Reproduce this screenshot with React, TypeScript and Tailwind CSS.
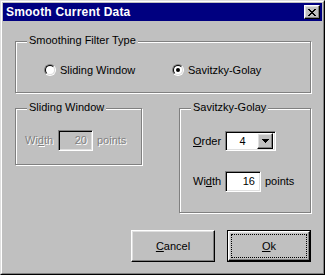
import React from "react";

const sunken =
  "border border-t-[#808080] border-l-[#808080] border-b-white border-r-white shadow-[inset_1px_1px_0_#000,inset_-1px_-1px_0_#dfdfdf]";
const raised =
  "border border-t-white border-l-white border-b-black border-r-black shadow-[inset_-1px_-1px_0_#808080,inset_1px_1px_0_#dfdfdf]";
const disabledText = "text-[#808080] [text-shadow:1px_1px_0_#fff]";

function Radio({ checked }: { checked?: boolean }) {
  return (
    <span className="flex w-[12px] h-[12px] rounded-full border border-t-[#808080] border-l-[#808080] border-b-white border-r-white">
      <span className="flex flex-1 items-center justify-center rounded-full border border-t-black border-l-black border-b-[#dfdfdf] border-r-[#dfdfdf] bg-white">
        {checked && <span className="w-[4px] h-[4px] rounded-full bg-black" />}
      </span>
    </span>
  );
}

function Group({ label, className, children }: { label: string; className: string; children?: React.ReactNode }) {
  return (
    <div className={"relative border border-[#808080] shadow-[1px_1px_0_#fff,inset_1px_1px_0_#fff] " + className}>
      <span className="absolute -top-[8px] left-[11px] px-[2px] bg-[#c0c0c0] leading-[13px]">{label}</span>
      {children}
    </div>
  );
}

export default function App() {
  return (
    <div
      className="w-[325px] h-[275px] bg-[#c0c0c0] border border-t-[#dfdfdf] border-l-[#dfdfdf] border-b-black border-r-black text-[11px] text-black"
      style={{ fontFamily: '"Liberation Sans", Arial, sans-serif' }}
    >
      <div className="h-full flex flex-col p-[1px] border border-t-white border-l-white border-b-[#808080] border-r-[#808080]">
        {/* title bar */}
        <div className="h-[18px] bg-[#000080] flex items-center justify-between pl-[3px] pr-[2px]">
          <span className="text-white font-bold text-[12px] leading-[14px] tracking-[0.2px]">Smooth Current Data</span>
          <button className={"w-[16px] h-[14px] bg-[#c0c0c0] flex items-center justify-center " + raised}>
            <svg width="8" height="7" viewBox="0 0 8 7" shapeRendering="crispEdges">
              <path d="M0 0h2v1h-2zM6 0h2v1h-2zM1 1h2v1h-2zM5 1h2v1h-2zM2 2h4v1h-4zM3 3h2v1h-2zM2 4h4v1h-4zM1 5h2v1h-2zM5 5h2v1h-2zM0 6h2v1h-2zM6 6h2v1h-2z" fill="#000" />
            </svg>
          </button>
        </div>

        <div className="pl-[12px] flex flex-col">
          {/* filter type */}
          <Group label="Smoothing Filter Type" className="mt-[20px] w-[296px] h-[52px]">
            <div className="flex items-center pt-[20px] pl-[28px]">
              <span className="w-[128px] flex items-center">
                <Radio />
                <span className="ml-[4px]">Sliding Window</span>
              </span>
              <span className="flex items-center">
                <Radio checked />
                <span className="ml-[4px]">Savitzky-Golay</span>
              </span>
            </div>
          </Group>

          <div className="flex items-start mt-[15px]">
            <Group label="Sliding Window" className="w-[127px] h-[57px]">
              <div className="flex items-center pt-[21px] pl-[9px]">
                <span className={"w-[33px] " + disabledText}>
                  Wi<span className="underline">d</span>th
                </span>
                <div className={"w-[35px] h-[21px] flex items-center justify-end pr-[5px] " + sunken}>
                  <span className={disabledText}>20</span>
                </div>
                <span className={"ml-[4px] " + disabledText}>points</span>
              </div>
            </Group>

            <Group label="Savitzky-Golay" className="ml-[37px] w-[132px] h-[105px]">
              <div className="flex flex-col pt-[22px] pl-[13px] gap-[20px]">
                <div className="flex items-center">
                  <span className="w-[32px]">
                    <span className="underline">O</span>rder
                  </span>
                  <div className={"w-[51px] h-[20px] flex items-center bg-white p-[2px] " + sunken}>
                    <span className="flex-1 text-center">4</span>
                    <span className={"w-[16px] h-[16px] bg-[#c0c0c0] flex items-center justify-center " + raised}>
                      <svg width="7" height="4" viewBox="0 0 7 4" shapeRendering="crispEdges">
                        <path d="M0 0h7v1h-7zM1 1h5v1h-5zM2 2h3v1h-3zM3 3h1v1h-1z" fill="#000" />
                      </svg>
                    </span>
                  </div>
                </div>
                <div className="flex items-center">
                  <span className="w-[32px]">
                    Wi<span className="underline">d</span>th
                  </span>
                  <div className={"w-[36px] h-[21px] flex items-center justify-end pr-[5px] bg-white " + sunken}>
                    16
                  </div>
                  <span className="ml-[4px]">points</span>
                </div>
              </div>
            </Group>
          </div>

          {/* buttons */}
          <div className="flex justify-end gap-[12px] mt-[17px] w-[296px]">
            <button className={"w-[84px] h-[32px] bg-[#c0c0c0] flex items-center justify-center " + raised}>
              <span>
                <span className="underline">C</span>ancel
              </span>
            </button>
            <button className="w-[84px] h-[32px] border border-black bg-[#c0c0c0] flex">
              <span className={"flex-1 flex p-[2px] " + raised}>
                <span className="flex-1 flex items-center justify-center border border-dotted border-black">
                  <span>
                    <span className="underline">O</span>k
                  </span>
                </span>
              </span>
            </button>
          </div>
        </div>
      </div>
    </div>
  );
}
